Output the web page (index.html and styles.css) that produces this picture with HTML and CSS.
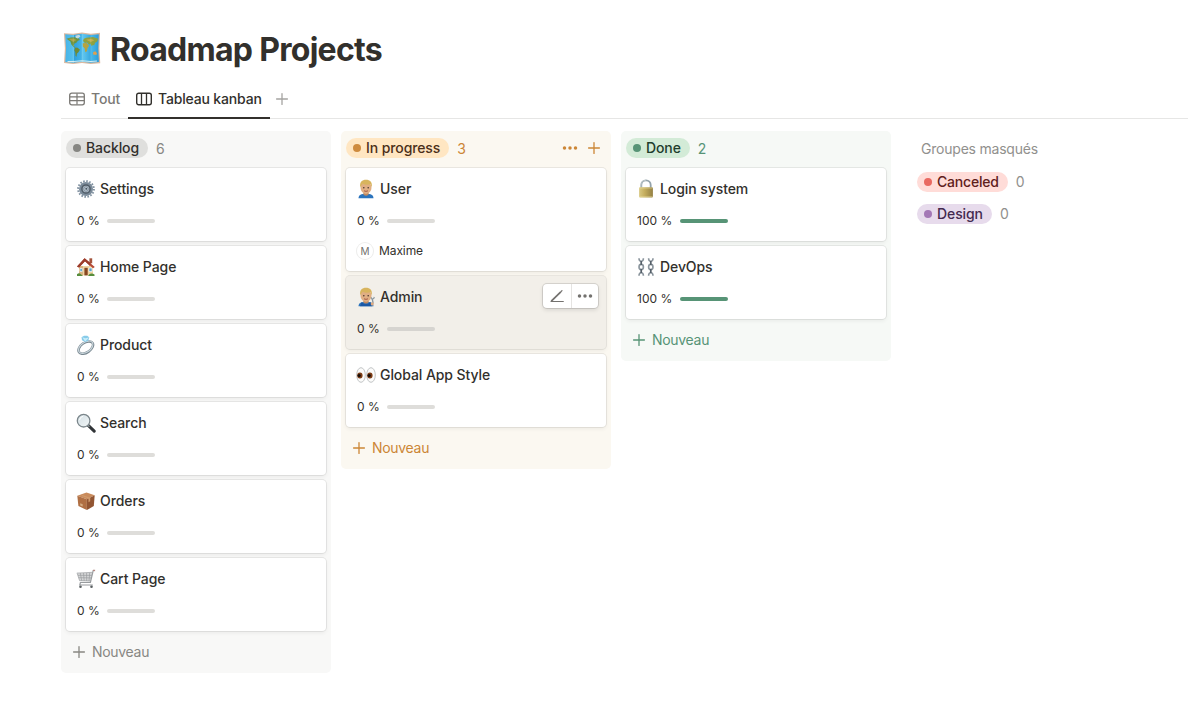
FILE: index.html
```html
<!DOCTYPE html>
<html lang="fr">
<head>
<meta charset="utf-8">
<title>Roadmap Projects</title>
<link rel="stylesheet" href="styles.css">
</head>
<body>
<svg class="defs" aria-hidden="true">
  <defs>
    <linearGradient id="sea" x1="0" x2="1"><stop offset="0" stop-color="#47b4e8"/><stop offset=".25" stop-color="#56c0ec"/><stop offset=".26" stop-color="#2fa0dc"/><stop offset=".5" stop-color="#45b5e8"/><stop offset=".51" stop-color="#62c8f0"/><stop offset=".75" stop-color="#38a8e0"/><stop offset=".76" stop-color="#4ab9ea"/><stop offset="1" stop-color="#2c9cda"/></linearGradient>
    <linearGradient id="brass" x1="0" x2="1"><stop offset="0" stop-color="#d9c984"/><stop offset=".4" stop-color="#c5ae5e"/><stop offset="1" stop-color="#948044"/></linearGradient>
    <linearGradient id="lens" x1="0" y1="0" x2="1" y2="1"><stop offset="0" stop-color="#d3dfe4"/><stop offset="1" stop-color="#f2f6f7"/></linearGradient>
    <symbol id="plus" viewBox="0 0 14 14"><path d="M7 1.600v10.800M1.600 7h10.800" stroke="currentColor" stroke-width="1.300" stroke-linecap="round"/></symbol>
    <symbol id="dots" viewBox="0 0 16 6"><g fill="currentColor"><circle cx="2.500" cy="3" r="1.750"/><circle cx="8" cy="3" r="1.750"/><circle cx="13.500" cy="3" r="1.750"/></g></symbol>
    <symbol id="gear" viewBox="0 0 20 20">
      <circle cx="10" cy="10" r="7.900" fill="none" stroke="#7d8e9e" stroke-width="1.900" stroke-dasharray="1.600 1.500"/>
      <circle cx="10" cy="10" r="5.500" fill="#a9b6c2" stroke="#7b8b9a" stroke-width="3"/>
      <circle cx="10" cy="10" r="4.100" fill="none" stroke="#505c68" stroke-width="1.500"/>
      <circle cx="10" cy="10" r="2.200" fill="#c3d1dc" stroke="#74828f" stroke-width=".8"/><circle cx="10.200" cy="9.800" r=".9" fill="#35414b"/>
    </symbol>
    <symbol id="house" viewBox="0 0 20 20">
      <path d="M3 9h14v9.400H3z" fill="#efd4a4"/><path d="M3 9h4v9.400H3z" fill="#d9b583"/>
      <path d="M13.400 1.300h2.800v5h-2.800z" fill="#a3533b"/>
      <path d="M8.600 1.200 1 9.600l2 .9 6-6.300 8 7 1.800-1.200z" fill="#b64a35"/><path d="M8.600 1.200 14.500 6l-.5 3-5-4.800L3 10.500 1 9.600z" fill="#9a3c2c"/>
      <path d="M8.400 10.800h3.300v7.600H8.400z" fill="#874722"/><path d="M13 11h3v3.500h-3zM4 11.500h2.300v3H4z" fill="#5aa4cc" stroke="#fff" stroke-width=".6"/>
      <path d="M1 17.200q2-2 4 0l2 1.800H1zM13 17.500q2.500-2 5.500 0V19H12z" fill="#578d3c"/>
    </symbol>
    <symbol id="ring" viewBox="0 0 20 20">
      <ellipse cx="9.800" cy="12.600" rx="8.200" ry="4.900" transform="rotate(-35 9.800 12.600)" fill="none" stroke="#77868f" stroke-width="2.500"/>
      <ellipse cx="9.700" cy="12.200" rx="8.200" ry="4.900" transform="rotate(-35 9.700 12.200)" fill="none" stroke="#cad6dc" stroke-width="1.200"/>
      <path d="M5.500 2.200 8 .8h3.300l2 1.700-1.100 3.300-3 1.200L6 5.200z" fill="#87cbe9"/><path d="m6.300 2.300 3 1 3.800-.8-4 4z" fill="#c7ecf9"/>
    </symbol>
    <symbol id="glass" viewBox="0 0 20 20">
      <path d="m12.500 12.700 5.700 5.500" stroke="#303437" stroke-width="3" stroke-linecap="round"/><path d="m11.500 11.800 2 2" stroke="#8b9498" stroke-width="1.500"/>
      <circle cx="7.600" cy="7.700" r="6.300" fill="url(#lens)" stroke="#7b868b" stroke-width="1.300"/><path d="M3.600 7a4.200 4.200 0 0 1 3.600-3.700" stroke="#fff" stroke-width="1" fill="none"/>
    </symbol>
    <symbol id="box" viewBox="0 0 20 20">
      <path d="m1.300 4.700 9.200-3.200 8.200 2.800-7.800 4z" fill="#c98b5c"/><path d="m1.300 4.700 9.600 3.600v10.800l-8.500-4z" fill="#b06f43"/><path d="m10.900 8.300 7.800-4-.9 10.800-6.900 4z" fill="#925532"/>
      <path d="m4.900 3.400 9.300 3.300v3.600l-1.700.9V7.400L6.500 5.300z" fill="#d09a6b"/><path d="m4.200 12.300 2.500 1v2.300l-2.500-1z" fill="#d4ad83"/>
    </symbol>
    <symbol id="cart" viewBox="0 0 20 20">
      <path d="m1.200 4.200 15.400-.8-2.200 8.800-10.800-.5z" fill="#d5d6d7"/>
      <g fill="none" stroke="#999c9f"><path d="M19 1.500h-1.800l-2.800 11.800-10 .2L3.800 16h13" stroke-width="1.200"/><path d="m.8 4.100 15.800-.8M1.200 4.400l2.400 7.300 11.200.4M2 6.300l14 .1M2.800 8.700l12.800.2M4.300 4l1.400 7.800M7.500 4l.7 7.800M10.600 4l.1 8M13.700 3.800 13 12" stroke-width=".7"/></g>
      <circle cx="4.500" cy="17.700" r="1.300" fill="#5b6063"/><circle cx="15.500" cy="17.700" r="1.300" fill="#5b6063"/><path d="m17 1.400 2.100.1" stroke="#b58a85" stroke-width="1.300"/>
    </symbol>
    <symbol id="man" viewBox="0 0 20 20">
      <path d="M2.500 19.200c.2-3.400 2.600-4.500 7.500-4.500s7.300 1.100 7.500 4.500z" fill="#2c74bd"/>
      <path d="M7.400 12h5.200v3.500q-2.600 2.500-5.200 0z" fill="#c18a60"/><ellipse cx="10" cy="8.800" rx="5.500" ry="6.100" fill="#e0ae83"/>
      <path d="M4.200 8.200C3.500 3 6 .8 10 .8s6.500 2.200 5.800 7.400l-1.400-2.900Q10 6.500 6.700 4.800z" fill="#d8b45d"/>
      <circle cx="7.800" cy="8.700" r=".8" fill="#49362b"/><circle cx="12.200" cy="8.700" r=".8" fill="#49362b"/><path d="M8 11.800q2 1.200 4 0" stroke="#a0523f" stroke-width=".9" fill="none"/>
    </symbol>
    <symbol id="mechanic" viewBox="0 0 20 20">
      <use href="#man"/><path d="M5.500 15.300 8 16.700h4l2.500-1.400 1.500 3.900H4z" fill="#1b58a5"/><path d="m16.300 12.200.7 3.300-1 3.500" fill="none" stroke="#87939c" stroke-width="1.300"/><path d="m15 10.400 1.100 1.800 1.600-.6.600-1.600" fill="none" stroke="#87939c" stroke-width="1.100"/><circle cx="16.200" cy="16.800" r="1.500" fill="#dfaa80"/>
    </symbol>
    <symbol id="eyes" viewBox="0 0 20 20">
      <g fill="#fbfbfa" stroke="#b1b5b6" stroke-width=".8"><ellipse cx="5" cy="10" rx="4.300" ry="7.300"/><ellipse cx="15" cy="10" rx="4.300" ry="7.300"/></g>
      <g fill="#7c3c16"><ellipse cx="3.900" cy="10.500" rx="2.700" ry="3"/><ellipse cx="13.900" cy="10.500" rx="2.700" ry="3"/></g><g fill="#150e0b"><circle cx="3.200" cy="10.500" r="1.600"/><circle cx="13.200" cy="10.500" r="1.600"/></g>
    </symbol>
    <symbol id="lock" viewBox="0 0 20 20">
      <path d="M5.300 9V6a4.700 4.700 0 0 1 9.400 0v3" fill="none" stroke="#94a3ab" stroke-width="1.800"/><path d="M5 9V6a5 5 0 0 1 5-4.800" fill="none" stroke="#c7d0d2" stroke-width=".8"/><rect x="3.100" y="8.300" width="13.800" height="10.300" rx="1" fill="url(#brass)"/><path d="M3.400 9h13.200M3.400 17.800h13.200" stroke="#eadb9d" stroke-width=".6"/>
    </symbol>
    <symbol id="chains" viewBox="0 0 20 20">
      <g fill="none" stroke="#8c969e" stroke-width="1.600"><ellipse cx="5.200" cy="10" rx="2.200" ry="2.600"/><ellipse cx="14.800" cy="10" rx="2.200" ry="2.600"/><path d="M3 1.200q0 3 2.200 3t2.200-3M3 18.800q0-3 2.200-3t2.200 3M12.600 1.200q0 3 2.200 3t2.200-3M12.600 18.800q0-3 2.200-3t2.200 3"/></g><path d="M5.200 3.900v4M5.200 12.100v4M14.800 3.900v4M14.800 12.100v4" stroke="#56616a" stroke-width="1.700"/>
    </symbol>
  </defs>
</svg>

<main class="page">
  <header class="title-row">
    <svg class="map" viewBox="0 0 36 32">
      <path d="m.5 1.200 9 .6L18 .500l8.500 1.200L35.500.700l-.6 15 .8 14.500-9.200.8-8.500-1-8.700 1-8.700-1 .8-14z" fill="#dbb9a0"/>
      <path d="m1.700 2.300 7.800.600L18 1.700l8.500 1.200 7.800-.8-.5 13.800.6 13.200-7.900.700-8.500-1-8.700 1-7.500-.800.700-13.300z" fill="url(#sea)"/>
      <path d="m3 6.500 4-1.200 4-.2 3.500 1 1.500 1.700-2 .6-1.500 2-1.800.7-.8 2.300 1.600 1.600-1.500-.3-2.300-2.500-.9-3-1.800-1.200z" fill="#6d9440"/><path d="m5 6.500 5-.3 2.500 1.500-3 1.900z" fill="#a9a245"/>
      <path d="m11.500 15 2.300.3 2.200 1.800-1.500 2.500-1.400 1.300-.5 3-.8-.6-.3-3.500-1-2z" fill="#6f8a35"/><path d="m11.500 3.600 3.800-.9 1.200 1.600-2.500 2.100-2-.8z" fill="#c3dae0"/>
      <path d="m19 8.800.8-2.200 2.400-1 6.500-.8 5 1.700-1 2.700-2 1.200-.9 2.500-1.300-.4-1 1.400-1.200-2.200-1.800.4-1.500-1.800-2.200.4z" fill="#8fa13f"/><path d="m22 7.500 5-1 3 1.500-3.500 1.700z" fill="#c2ad4d"/>
      <path d="m18.700 11 3.800-.4 2.500 2.800-1.500 1.800-.7 3.500-1.600 1-.7-4-1.700-1.700z" fill="#b5a341"/><path d="m28.800 19.700 2.100-1 1.700 2-.8 1.500-3-.4z" fill="#df9f4f"/><path d="m4 28.500 5.500.1 8.500-.8 8.500.7 6-.3" stroke="#d5edf2" stroke-width="1" fill="none"/><path d="M9.500 3v27M18 2v27M26.500 3v27" stroke="#fff" stroke-opacity=".2" stroke-width=".6"/>
    </svg>
    <h1>Roadmap Projects</h1>
  </header>

  <nav class="tabs">
    <div class="tab"><svg class="view-icon" viewBox="0 0 16 14"><rect x=".7" y="1.200" width="14.600" height="11.600" rx="2" fill="none" stroke="currentColor" stroke-width="1.300"/><path d="M1 4.800h14M1 8.700h14M8 1.500v11" stroke="currentColor" stroke-width="1.200"/></svg><span>Tout</span></div>
    <div class="tab active"><svg class="view-icon" viewBox="0 0 16 14"><rect x=".7" y="1.200" width="14.600" height="11.600" rx="2" fill="none" stroke="currentColor" stroke-width="1.400"/><path d="M5.500 1.500v11M10.500 1.500v11" stroke="currentColor" stroke-width="1.300"/></svg><span>Tableau kanban</span></div>
    <svg class="plus tab-add"><use href="#plus"/></svg>
  </nav>

  <div class="board">
    <section class="column gray">
      <div class="column-head"><span class="pill">Backlog</span><span class="count">6</span></div>
      <div class="cards">
        <article class="card"><h2><svg><use href="#gear"/></svg>Settings</h2><div class="progress">0 %<i></i></div></article>
        <article class="card"><h2><svg><use href="#house"/></svg>Home Page</h2><div class="progress">0 %<i></i></div></article>
        <article class="card"><h2><svg><use href="#ring"/></svg>Product</h2><div class="progress">0 %<i></i></div></article>
        <article class="card"><h2><svg><use href="#glass"/></svg>Search</h2><div class="progress">0 %<i></i></div></article>
        <article class="card"><h2><svg><use href="#box"/></svg>Orders</h2><div class="progress">0 %<i></i></div></article>
        <article class="card"><h2><svg><use href="#cart"/></svg>Cart Page</h2><div class="progress">0 %<i></i></div></article>
      </div>
      <div class="new"><svg class="plus"><use href="#plus"/></svg>Nouveau</div>
    </section>

    <section class="column orange">
      <div class="column-head"><span class="pill">In progress</span><span class="count">3</span><span class="head-actions"><svg class="dots"><use href="#dots"/></svg><svg class="plus"><use href="#plus"/></svg></span></div>
      <div class="cards">
        <article class="card"><h2><svg><use href="#man"/></svg>User</h2><div class="progress">0 %<i></i></div><div class="person"><b>M</b>Maxime</div></article>
        <article class="card hovered"><h2><svg><use href="#mechanic"/></svg>Admin</h2><div class="progress">0 %<i></i></div>
          <div class="card-actions"><span><svg class="pencil" viewBox="0 0 14 14"><path d="M1.300 12.200 10.800 2.800" stroke="currentColor" stroke-width="1.700"/><path d="m11.100 2.500.9-.9M1 12.500h12.300" stroke="currentColor" stroke-width="1.200" stroke-linecap="round"/></svg></span><span><svg class="dots"><use href="#dots"/></svg></span></div>
        </article>
        <article class="card"><h2><svg><use href="#eyes"/></svg>Global App Style</h2><div class="progress">0 %<i></i></div></article>
      </div>
      <div class="new"><svg class="plus"><use href="#plus"/></svg>Nouveau</div>
    </section>

    <section class="column green">
      <div class="column-head"><span class="pill">Done</span><span class="count">2</span></div>
      <div class="cards">
        <article class="card"><h2><svg><use href="#lock"/></svg>Login system</h2><div class="progress">100 %<i></i></div></article>
        <article class="card"><h2><svg><use href="#chains"/></svg>DevOps</h2><div class="progress">100 %<i></i></div></article>
      </div>
      <div class="new"><svg class="plus"><use href="#plus"/></svg>Nouveau</div>
    </section>

    <aside class="hidden-groups">
      <p>Groupes masqués</p>
      <div class="group red"><span class="pill">Canceled</span><span class="count">0</span></div>
      <div class="group purple"><span class="pill">Design</span><span class="count">0</span></div>
    </aside>
  </div>
</main>
</body>
</html>
```
FILE: styles.css
```css
* { box-sizing: border-box; }
body { margin: 0; background: #fff; color: #32302c; font: 14px/20px Inter, "Liberation Sans", sans-serif; overflow: hidden; }
h1, h2, p { margin: 0; }
svg { display: block; flex: none; }
.defs { position: absolute; width: 0; height: 0; }
.page { padding: 30px 0 0 61px; }
.title-row { display: flex; align-items: center; height: 40px; padding-left: 2px; }
.map { width: 38px; height: 33px; margin: -4px 9px 0 0; }
h1 { font-size: 32px; line-height: 40px; font-weight: 700; letter-spacing: -.71px; white-space: nowrap; }
.plus { width: 14px; height: 14px; }
.dots { width: 16px; height: 6px; }

.tabs { display: flex; height: 39px; margin-top: 10px; padding-top: 4px; border-bottom: 1px solid #e6e6e5; font-weight: 500; letter-spacing: -.17px; color: #7b7975; }
.tab { display: flex; gap: 6px; height: 35px; padding: 5px 8px 0; white-space: nowrap; }
.tab:first-child { width: 67px; }
.tab.active { width: 142px; color: #32302c; border-bottom: 2px solid #32302c; }
.view-icon { width: 16px; height: 14px; margin-top: 3px; }
.tab-add { margin: 8px 0 0 5px; color: #a5a4a1; }

.board { display: flex; align-items: flex-start; gap: 10px; padding-top: 12px; }
.column { width: 270px; flex: none; padding: 7px 5px 0; border-radius: 5px; background: var(--bg); }
.gray { --bg: #f8f8f7; --pill: #dfdfdd; --dot: #868682; --ink: #32302c; --text: #888783; --bar: #deddda; }
.orange { --bg: #fbf8f1; --pill: #ffe6c2; --dot: #ce8b3e; --ink: #4b2f19; --text: #cc8636; --bar: #deddda; }
.green { --bg: #f6f9f6; --pill: #d3ebd7; --dot: #579476; --ink: #203d2c; --text: #579476; --bar: #579476; }
.red { --pill: #ffdcd8; --dot: #e96961; --ink: #60201c; --text: #91908d; }
.purple { --pill: #e7dbec; --dot: #a478b6; --ink: #442a50; --text: #91908d; }
.column-head { display: flex; align-items: center; height: 20px; }
.pill { display: flex; align-items: center; height: 20px; padding: 0 9px 0 7px; border-radius: 10px; background: var(--pill); color: var(--ink); font-weight: 500; letter-spacing: -.1px; white-space: nowrap; }
.red .pill { letter-spacing: -.2px; }
.pill::before { content: ""; width: 8px; height: 8px; margin-right: 5px; border-radius: 50%; background: var(--dot); }
.count { margin-left: 8px; color: var(--text); }
.column .count { padding-top: 2px; }
.head-actions { display: flex; align-items: center; gap: 9px; margin: 0 5px 0 auto; color: var(--text); }

.cards { display: grid; gap: 5px; padding-top: 10px; }
.card { position: relative; padding: 11px 11px 10px; border-radius: 4px; background: #fff; box-shadow: 0 0 0 1px rgba(15, 15, 15, .07), 0 2px 4px rgba(15, 15, 15, .06); }
.card h2 { display: flex; align-items: center; gap: 4px; height: 20px; font-size: 14px; line-height: 20px; font-weight: 500; letter-spacing: -.08px; white-space: nowrap; }
.card h2 svg { width: 20px; height: 20px; margin-left: -1px; }
.progress { display: flex; align-items: center; gap: 7px; height: 20px; margin-top: 12px; font-size: 12px; white-space: nowrap; }
.green .progress { gap: 8px; }
.progress i { width: 48px; height: 4px; border-radius: 2px; background: var(--bar); }
.person { display: flex; align-items: center; height: 20px; margin-top: 10px; font-size: 12px; letter-spacing: -.1px; }
.person b { width: 16px; height: 16px; margin-right: 6px; border-radius: 50%; box-shadow: 0 0 0 1px #ededec; color: #73716e; font-size: 10px; line-height: 16px; font-weight: 400; text-align: center; }
.hovered { background: #f2efe9; --bar: #d6d4d0; }
.card-actions { position: absolute; top: 8px; right: 8px; display: flex; width: 55px; height: 24px; border-radius: 4px; background: #fff; color: #73716e; box-shadow: 0 0 0 1px rgba(15, 15, 15, .12), 0 2px 4px rgba(15, 15, 15, .12); }
.card-actions span { display: flex; width: 27px; align-items: center; justify-content: center; }
.card-actions span:first-child { width: 28px; }
.card-actions span + span { border-left: 1px solid #e5e4e2; }
.pencil { width: 14px; height: 14px; }
.new { display: flex; align-items: center; gap: 6px; height: 42px; padding-left: 6px; letter-spacing: -.3px; color: var(--text); }

.hidden-groups { padding: 8px 0 0 16px; color: #91908d; }
.hidden-groups p { padding-left: 4px; letter-spacing: -.22px; }
.group { display: flex; align-items: center; height: 20px; margin-top: 12px; }
p + .group { margin-top: 13px; }
```
